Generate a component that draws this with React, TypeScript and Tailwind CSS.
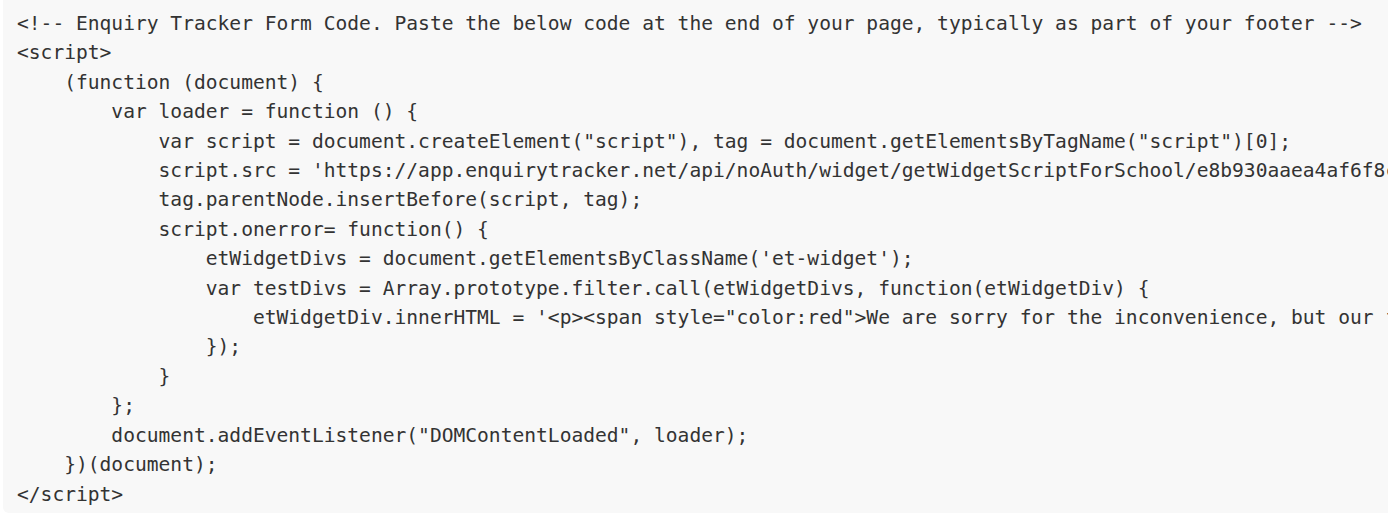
import React from "react";

const lines = [
  "<!-- Enquiry Tracker Form Code. Paste the below code at the end of your page, typically as part of your footer -->",
  "<script>",
  "    (function (document) {",
  "        var loader = function () {",
  '            var script = document.createElement("script"), tag = document.getElementsByTagName("script")[0];',
  "            script.src = 'https://app.enquirytracker.net/api/noAuth/widget/getWidgetScriptForSchool/e8b930aaea4af6f8c0d3b2a1';",
  "            tag.parentNode.insertBefore(script, tag);",
  "            script.onerror= function() {",
  "                etWidgetDivs = document.getElementsByClassName('et-widget');",
  "                var testDivs = Array.prototype.filter.call(etWidgetDivs, function(etWidgetDiv) {",
  '                    etWidgetDiv.innerHTML = \'<p><span style="color:red">We are sorry for the inconvenience, but our form is currently unavailable.</span></p>\';',
  "                });",
  "            }",
  "        };",
  '        document.addEventListener("DOMContentLoaded", loader);',
  "    })(document);",
  "</script>",
];

export default function App() {
  return (
    <div className="w-[1388px] h-[518px] overflow-hidden bg-white">
      <div className="ml-[3px] w-[1500px] h-[513px] overflow-hidden rounded-b-[6px] bg-[#f8f8f8] pl-[14px] pt-[9px]">
        <pre
          className="m-0 whitespace-pre text-[19.6px] leading-[29.4px] text-[#333333]"
          style={{ fontFamily: '"DejaVu Sans Mono", "Liberation Mono", monospace' }}
        >
          {lines.join("\n")}
        </pre>
      </div>
    </div>
  );
}
